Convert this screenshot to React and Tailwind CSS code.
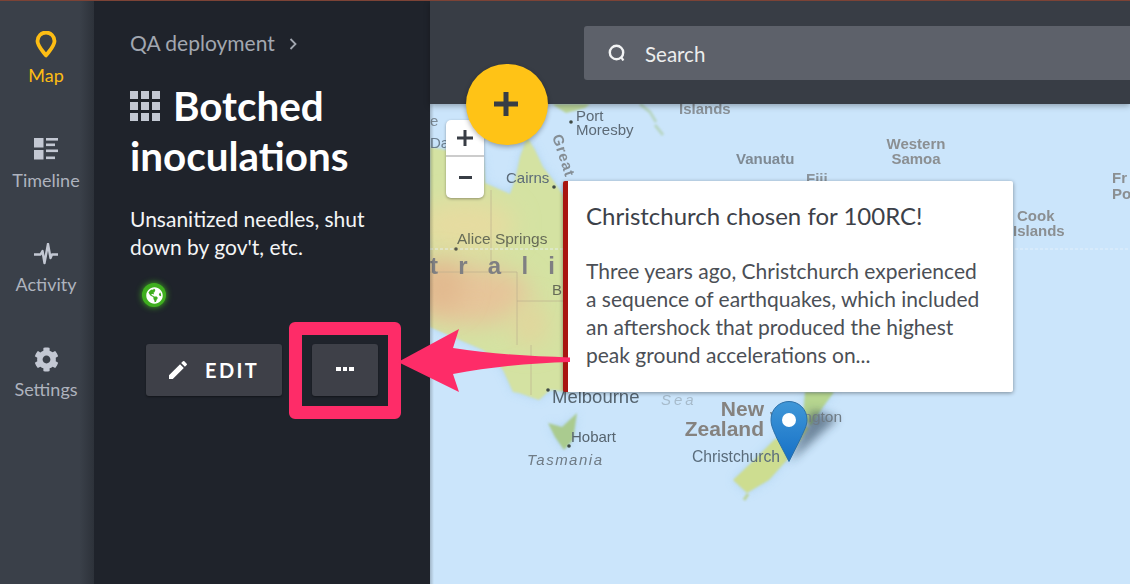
import React from 'react';
import { FaCog, FaGlobeAmericas } from 'react-icons/fa';
import { MdEdit } from 'react-icons/md';

const AUSTRALIA = 'M430 147L446 150 483 157 485 183 510 194 515 180 520 157 527 137 535 150 543 167 553 180 563 195 590 300 570 392 550 390 539 400 519 393 513 392 503 370 483 350 460 340 430 327z';
const TASMANIA = 'M548 423L562 427 577 413 573 440 564 450 555 437z';
const SOUTH_ISLAND = 'M803 424L809 428 787 460 769 480 747 493 733 480 751 463 774 440z';
const NORTH_ISLAND = 'M805 392L834 392 823 407 811 426 803 418z';

const MapPinIcon = () => (
    <svg width="22" height="27" viewBox="0 0 22 27">
        <path d="M11 24.500C7 19 2.500 15 2.500 10a8.500 8.500 0 0 1 17 0c0 5-4.500 9-8.500 14.500z" fill="none" stroke="#fdbd14" strokeWidth="3.800" strokeLinejoin="round" />
    </svg>
);

const TimelineIcon = () => (
    <svg width="24" height="22" viewBox="0 0 24 22" fill="#c3c8d3">
        <rect x="0" y="0" width="9.500" height="9.500" />
        <rect x="0" y="12" width="9.500" height="9.500" />
        <rect x="12" y="0" width="12" height="2.600" />
        <rect x="12" y="5.500" width="9" height="2.600" />
        <rect x="12" y="11.500" width="12" height="2.600" />
        <rect x="12" y="18.500" width="9" height="2.600" />
    </svg>
);

const ActivityIcon = () => (
    <svg className="mt-[2px]" width="24" height="22" viewBox="0 0 24 22">
        <path d="M0 11.500h6.500l2-3.500 2 12 3.500-19 2.500 14 1.500-3.500H24" fill="none" stroke="#c3c8d3" strokeWidth="2.400" strokeLinejoin="round" />
    </svg>
);

const GridIcon = () => (
    <div className="grid grid-cols-3 gap-[2.500px] w-[30px] h-[30px] shrink-0">
        {Array.from({ length: 9 }).map((_, i) => (
            <div key={i} className="bg-[#c3c8d3]" />
        ))}
    </div>
);

const SearchIcon = () => (
    <svg width="20" height="20" viewBox="0 0 20 20">
        <circle cx="9.500" cy="9.500" r="6.700" fill="none" stroke="#f2f3f4" strokeWidth="2.400" />
        <path d="M14.500 14.500l1.800 3" stroke="#f2f3f4" strokeWidth="2.400" />
    </svg>
);

const NavItem = ({ icon, label, active }) => (
    <div className={`h-[104.600px] flex flex-col items-center ${active ? 'text-[#fdbd14]' : 'text-[#aeb3be]'}`}>
        <div className="h-[32px] flex items-center justify-center">{icon}</div>
        <div className="mt-[3px] text-[18px] leading-[24px]">{label}</div>
    </div>
);

const MapBackdrop = () => (
    <svg className="absolute inset-0" width="700" height="480" viewBox="430 104 700 480">
        <defs>
            <filter id="soft" x="-20%" y="-20%" width="140%" height="140%"><feGaussianBlur stdDeviation="1.200" /></filter>
            <filter id="halo" x="-30%" y="-30%" width="160%" height="160%"><feGaussianBlur stdDeviation="5" /></filter>
            <filter id="terrain" x="-60%" y="-60%" width="220%" height="220%"><feGaussianBlur stdDeviation="12" /></filter>
            <filter id="shade" x="-50%" y="-50%" width="200%" height="200%"><feGaussianBlur stdDeviation="5" /></filter>
            <clipPath id="aus"><path d={AUSTRALIA} /></clipPath>
        </defs>

        <rect x="430" y="104" width="700" height="480" fill="#cbe5fb" />

        {/* shallow water around the coasts */}
        <g filter="url(#halo)" fill="#abd0ef" opacity="0.75">
            <path d={AUSTRALIA} />
            <path d={TASMANIA} />
            <path d={SOUTH_ISLAND} />
            <path d={NORTH_ISLAND} />
        </g>

        {/* Australia */}
        <path d={AUSTRALIA} fill="#d4e2a2" filter="url(#soft)" />
        <g clipPath="url(#aus)">
            <ellipse cx="465" cy="225" rx="50" ry="25" fill="#e6dca0" filter="url(#terrain)" />
            <ellipse cx="472" cy="295" rx="58" ry="30" fill="#e6c59a" filter="url(#terrain)" />
            <ellipse cx="440" cy="285" rx="24" ry="26" fill="#e2b98f" filter="url(#terrain)" />
            <ellipse cx="530" cy="325" rx="18" ry="22" fill="#e2d59c" filter="url(#terrain)" />
            <path d="M491 190V272M430 272H517V345M517 301H563M531 345V395" stroke="#b8ab8e" strokeWidth="1" fill="none" opacity="0.6" />
        </g>

        {/* Papua New Guinea shore and reefs */}
        <path d="M552 104L566 113 585 108 590 104z" fill="#bcd69b" filter="url(#soft)" />
        <path d="M640 104l10 8 6 10M655 125l8 10" stroke="#b8d6c4" strokeWidth="3" fill="none" filter="url(#soft)" />

        {/* Tasmania and New Zealand */}
        <g filter="url(#soft)">
            <path d={TASMANIA} fill="#aacb8f" />
            <path d={SOUTH_ISLAND} fill="#cddd90" />
            <path d={NORTH_ISLAND} fill="#b6d58f" />
            <path d="M748 494l-4 6" stroke="#bcd39a" strokeWidth="3" />
        </g>

        {/* tropic line */}
        <path d="M430 249H1130" stroke="#e8f3fb" strokeWidth="1" strokeDasharray="3 2" opacity="0.8" />

        {/* city dots */}
        <circle cx="554" cy="187" r="1.800" fill="#3f4a45" />
        <circle cx="456" cy="249" r="1.800" fill="#55584a" />
        <circle cx="571" cy="122" r="1.800" fill="#3f4a45" />
        <circle cx="548" cy="390" r="1.800" fill="#3f4a45" />
        <circle cx="569" cy="446" r="1.800" fill="#3f4a45" />

        {/* marker shadow */}
        <path d="M790 462L838 418 812 410z" fill="#23384d" opacity="0.55" filter="url(#shade)" />
    </svg>
);

const MapLabels = () => (
    <div className="absolute inset-0 font-['Liberation_Sans',sans-serif] leading-none blur-[0.6px] whitespace-nowrap">
        <div className="absolute left-[0px] top-[9px] text-[15px] text-[#7e8c98]">e</div>
        <div className="absolute left-[0px] top-[31px] text-[15px] text-[#6d8090]">Da</div>
        <div className="absolute left-[146px] top-[5px] text-[15px] leading-[14px] text-[#5d6a76]">Port<br />Moresby</div>
        <div className="absolute left-[249px] top-[-3px] text-[15px] font-bold text-[#8a9299]">Islands</div>
        <div className="absolute left-[306px] top-[47px] text-[15px] font-bold text-[#7f8a94]">Vanuatu</div>
        <div className="absolute left-[456px] top-[32px] w-[60px] text-center text-[15px] font-bold leading-[15px] text-[#8b8f92]">Western<br />Samoa</div>
        <div className="absolute left-[376px] top-[67px] text-[15px] font-bold text-[#8b949c]">Fiji</div>
        <div className="absolute left-[682px] top-[66px] text-[15px] font-bold leading-[16px] text-[#8b8f92]">Fr<br />Po</div>
        <div className="absolute left-[583px] top-[104px] text-[15px] font-bold leading-[15px] text-[#8b8f92]"><span className="ml-[4px]">Cook</span><br />Islands</div>
        <div className="absolute left-[76px] top-[66px] text-[15px] text-[#5c6b78]">Cairns</div>
        <div className="absolute left-[112px] top-[44px] text-[15px] font-bold tracking-[1px] text-[#858e95] rotate-[72deg] origin-center">Great</div>
        <div className="absolute left-[27px] top-[127px] text-[15.500px] text-[#666b57]">Alice Springs</div>
        <div className="absolute left-[0px] top-[150px] w-[125px] flex justify-between text-[24px] font-bold text-[#7f7f82]">
            <span>t</span><span>r</span><span>a</span><span>l</span><span>i</span>
        </div>
        <div className="absolute left-[122px] top-[178px] text-[15px] text-[#666b57]">B</div>
        <div className="absolute left-[122px] top-[284px] text-[18.500px] text-[#56646f]">Melbourne</div>
        <div className="absolute left-[231px] top-[288px] text-[15px] italic tracking-[3px] text-[#a7bbcb]">Sea</div>
        <div className="absolute left-[244px] top-[295px] w-[90px] text-right text-[21px] font-bold leading-[20px] text-[#85827f]">New<br />Zealand</div>
        <div className="absolute left-[262px] top-[345px] text-[15.700px] text-[#5a6c7b]">Christchurch</div>
        <div className="absolute left-[340px] top-[305px] text-[15.500px] text-[#6f7b84]">Wellington</div>
        <div className="absolute left-[141px] top-[325px] text-[15px] text-[#56646f]">Hobart</div>
        <div className="absolute left-[97px] top-[348px] text-[15px] italic tracking-[1.500px] text-[#6f7b85]">Tasmania</div>
    </div>
);

const Marker = () => (
    <svg className="absolute left-[340px] top-[296px]" width="38" height="62" viewBox="0 0 38 62">
        <defs>
            <linearGradient id="pin" x1="0" y1="0" x2="0" y2="1">
                <stop offset="0" stopColor="#3f97d8" />
                <stop offset="1" stopColor="#1670c6" />
            </linearGradient>
        </defs>
        <path d="M19 1.500C9 1.500 1 9.500 1 19.500c0 6.500 2.500 11 6 19l12 23 11.500-23c3.500-8 6.500-12.500 6.500-19C37 9.500 29 1.500 19 1.500z" fill="url(#pin)" stroke="#2a6fa8" strokeWidth="1" />
        <circle cx="19" cy="20" r="7" fill="#fff" />
    </svg>
);

const EventCard = () => (
    <div className="absolute left-[133px] top-[77px] w-[450px] h-[211px] bg-white border-l-[5.500px] border-[#a81510] rounded-[2px] shadow-[0_1px_4px_rgba(0,0,0,0.4)] pl-[18px] pt-[21px]">
        <h3 className="text-[24px] leading-[28px] text-[#3c4149]">Christchurch chosen for 100RC!</h3>
        <p className="mt-[27px] w-[400px] text-[21px] leading-[28px] text-[#4b4f56]">
            Three years ago, Christchurch experienced a sequence of earthquakes, which included an aftershock that produced the highest peak ground accelerations on...
        </p>
    </div>
);

const Annotation = () => (
    <>
        <div className="absolute left-[289px] top-[321px] w-[112px] h-[97px] border-[13.500px] border-[#fe2c68] rounded-[6px]" />
        <svg className="absolute left-[390px] top-[319px]" width="190" height="80" viewBox="390 320 190 80">
            <path d="M398 362L459 329 453 348C490 354 530 356 570 357.500V362C530 363 490 367 453 374L459 392z" fill="#fe2c68" />
        </svg>
    </>
);

export default function App() {
    return (
        <div className="relative w-[1130px] h-[584px] overflow-hidden flex font-['Lato',sans-serif] bg-[#1f232b] border-t border-[#7c4336]">
            {/* Left nav */}
            <div className="w-[94px] shrink-0 pt-[27px] pr-[2px] bg-gradient-to-r from-[#3a4049] from-[85%] to-[#2d323a] flex flex-col">
                <NavItem icon={<MapPinIcon />} label="Map" active />
                <NavItem icon={<TimelineIcon />} label="Timeline" />
                <NavItem icon={<ActivityIcon />} label="Activity" />
                <NavItem icon={<FaCog className="mt-[4px]" size={25} color="#c3c8d3" />} label="Settings" />
            </div>

            {/* Case panel */}
            <div className="w-[336px] shrink-0 pl-[36px] pt-[28px] bg-[#1f232b]">
                <div className="flex items-center text-[21px] leading-[28px] text-[#a2a7b0]">
                    QA deployment
                    <svg className="ml-[14px] mt-[2px]" width="9" height="14" viewBox="0 0 9 14">
                        <path d="M1.500 2l5 5-5 5" fill="none" stroke="#a2a7b0" strokeWidth="1.800" />
                    </svg>
                </div>
                <h1 className="mt-[24px] text-[40.400px] leading-[50px] font-bold text-white">
                    <div className="flex items-center gap-[13px]"><GridIcon />Botched</div>
                    inoculations
                </h1>
                <p className="mt-[24px] w-[270px] text-[21px] leading-[28px] text-[#f4f5f6]">Unsanitized needles, shut down by gov't, etc.</p>
                <div className="mt-[22px] ml-[12px] w-[24px] h-[24px] rounded-full bg-[#3fae1f] shadow-[0_0_6px_#3fae1f] flex items-center justify-center">
                    <FaGlobeAmericas size={17} color="#fff" />
                </div>
                <div className="mt-[37px] ml-[16px] flex gap-[30px]">
                    <button className="w-[136px] h-[52px] bg-[#3e4048] rounded-[3px] shadow-[0_1px_2px_rgba(0,0,0,0.4)] flex items-center pl-[20px] gap-[15px] text-white">
                        <MdEdit size={24} />
                        <span className="text-[20px] font-bold tracking-[2.400px]">EDIT</span>
                    </button>
                    <button className="w-[66px] h-[52px] bg-[#3e4048] rounded-[3px] shadow-[0_1px_2px_rgba(0,0,0,0.4)] flex items-center justify-center gap-[2px] pb-[3px]">
                        <span className="w-[4.500px] h-[4px] bg-white" />
                        <span className="w-[4.500px] h-[4px] bg-white" />
                        <span className="w-[4.500px] h-[4px] bg-white" />
                    </button>
                </div>
            </div>

            {/* Main area */}
            <div className="flex-1 flex flex-col">
                <div className="relative z-10 h-[103px] shrink-0 bg-[#383d45] shadow-[0_2px_6px_rgba(0,0,0,0.3)] pl-[154px] pt-[25px]">
                    <div className="h-[54px] bg-[#5d616a] rounded-l-[3px] flex items-center pl-[23px] gap-[18px] text-[20.500px] text-[#eceded]">
                        <SearchIcon />
                        <span className="mt-[2px]">Search</span>
                    </div>
                </div>
                <div className="relative flex-1 overflow-hidden">
                    <MapBackdrop />
                    <MapLabels />
                    <Marker />
                    <div className="absolute left-0 top-0 bottom-0 w-[4px] bg-gradient-to-r from-black/20 to-transparent" />
                    <div className="absolute left-[16px] top-[16px] w-[38px] h-[78px] bg-white rounded-[5px] shadow-[0_1px_3px_rgba(0,0,0,0.35)] flex flex-col text-[#383d45]">
                        <div className="h-[37px] border-b-2 border-[#cccccc] flex items-center justify-center">
                            <svg width="16" height="16" viewBox="0 0 16 16"><path d="M8 0v16M0 8h16" stroke="#383d45" strokeWidth="3" /></svg>
                        </div>
                        <div className="flex-1 flex items-center justify-center">
                            <div className="w-[13px] h-[3px] bg-[#383d45]" />
                        </div>
                    </div>
                    <EventCard />
                </div>
            </div>

            {/* Add button sits across the header and map */}
            <button className="absolute z-20 left-[466px] top-[63px] w-[82px] h-[81px] rounded-full bg-[#ffc316] shadow-[0_2px_5px_rgba(0,0,0,0.3)] flex items-center justify-center pr-[2px] pb-[2px]">
                <svg width="24" height="24" viewBox="0 0 24 24"><path d="M12 0v24M0 12h24" stroke="#383d45" strokeWidth="5" /></svg>
            </button>

            <div className="absolute z-30 inset-0 pointer-events-none">
                <Annotation />
            </div>
        </div>
    );
}
